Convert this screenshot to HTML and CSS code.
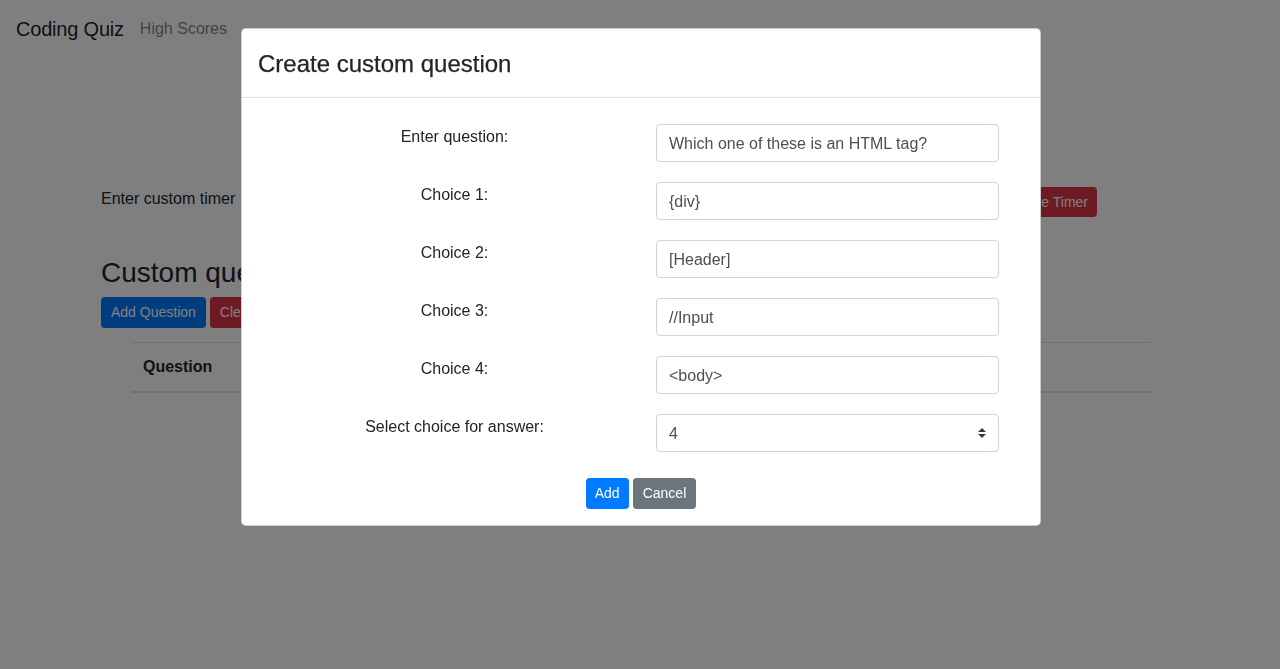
FILE: index.html
```html
<!DOCTYPE html>
<html lang="en">
<head>
<meta charset="utf-8">
<title>Coding Quiz</title>
<link rel="stylesheet" href="styles.css">
</head>
<body>
<nav class="navbar">
  <span class="brand">Coding Quiz</span>
  <span class="nav-link">High Scores</span>
</nav>
<main class="main">
  <div class="timer-row">
    <span class="timer-label">Enter custom timer</span>
    <input class="timer-input" type="text" value="">
    <button class="btn btn-sm btn-danger timer-btn">Update Timer</button>
  </div>
  <h3 class="section-title">Custom questions</h3>
  <div class="btn-row">
    <button class="btn btn-sm btn-primary wide">Add Question</button>
    <button class="btn btn-sm btn-danger wide">Clear Questions</button>
  </div>
  <table class="table">
    <thead>
      <tr><th>Question</th><th>Choices</th><th class="th-answer">Answer</th></tr>
    </thead>
  </table>
</main>

<div class="backdrop"></div>
<div class="modal">
  <div class="modal-dialog">
    <div class="modal-header">
      <h4 class="modal-title">Create custom question</h4>
    </div>
    <div class="modal-body">
      <form class="qform">
        <div class="frow">
          <label class="flabel">Enter question:</label>
          <div class="fcol"><input class="form-control" type="text" value="Which one of these is an HTML tag?"></div>
        </div>
        <div class="frow">
          <label class="flabel">Choice 1:</label>
          <div class="fcol"><input class="form-control" type="text" value="{div}"></div>
        </div>
        <div class="frow">
          <label class="flabel">Choice 2:</label>
          <div class="fcol"><input class="form-control" type="text" value="[Header]"></div>
        </div>
        <div class="frow">
          <label class="flabel">Choice 3:</label>
          <div class="fcol"><input class="form-control" type="text" value="//Input"></div>
        </div>
        <div class="frow">
          <label class="flabel">Choice 4:</label>
          <div class="fcol"><input class="form-control" type="text" value="&lt;body&gt;"></div>
        </div>
        <div class="frow">
          <label class="flabel">Select choice for answer:</label>
          <div class="fcol">
            <div class="select-wrap">
              <select class="form-control custom-select">
                <option>1</option><option>2</option><option>3</option><option selected>4</option>
              </select>
              <svg class="select-arrow" width="8" height="10" viewBox="0 0 4 5"><path d="M2 0L0 2h4zm0 5L0 3h4z" fill="#343a40"/></svg>
            </div>
          </div>
        </div>
        <div class="actions">
          <button type="button" class="btn btn-sm btn-primary">Add</button>
          <button type="button" class="btn btn-sm btn-secondary cancel">Cancel</button>
        </div>
      </form>
    </div>
  </div>
</div>
</body>
</html>
```

FILE: styles.css
```css
* { box-sizing: border-box; }
html, body { margin: 0; height: 100%; }
body {
  font-family: "Liberation Sans", Arial, sans-serif;
  font-size: 16px;
  line-height: 1.5;
  color: #212529;
  background: #fff;
  overflow: hidden;
}

.navbar {
  display: flex;
  align-items: center;
  padding: 8px 16px;
  height: 56px;
}
.brand {
  font-size: 20px;
  line-height: 30px;
  padding: 6px 0 4px;
  margin-right: 16px;
  color: rgba(0,0,0,.9);
  letter-spacing: -0.2px;
}
.nav-link {
  color: rgba(0,0,0,.5);
  padding: 9px 0 7px;
}

.main {
  padding: 131px 0 0 101px;
}
.timer-row {
  display: flex;
  align-items: flex-start;
  width: 996px;
  height: 31px;
}
.timer-label { margin-right: 12px; line-height: 24px; }
.timer-input {
  flex: 1;
  height: 31px;
  border: 1px solid #ced4da;
  border-radius: 4px;
  margin-right: 10px;
}
.btn {
  font-family: inherit;
  border: 1px solid transparent;
  color: #fff;
  cursor: pointer;
}
.btn-sm {
  font-size: 14px;
  line-height: 21px;
  padding: 4px 8px;
  border-radius: 3.2px;
}
.btn-sm.wide { padding: 4px 9px; }
.btn-sm.cancel { padding: 4px 9px; }
.timer-btn { height: 30px; }
.btn-primary { background: #007bff; border-color: #007bff; }
.btn-danger { background: #dc3545; border-color: #dc3545; }
.btn-secondary { background: #6c757d; border-color: #6c757d; }

.section-title {
  font-size: 28px;
  font-weight: 500;
  line-height: 1.2;
  margin: 38px 0 7px;
}
.btn-row {
  display: flex;
  gap: 4px;
}
.table {
  margin: 14px 0 0 30px;
  width: 1020px;
  border-collapse: collapse;
}
.table th {
  text-align: left;
  padding: 12px;
  border-top: 1px solid #dee2e6;
  border-bottom: 2px solid #dee2e6;
  line-height: 24px;
  font-weight: 700;
}
.table .th-answer { width: 200px; }

.backdrop {
  position: fixed;
  inset: 0;
  background: rgba(0,0,0,.5);
}
.modal {
  position: fixed;
  inset: 0;
  display: flex;
  justify-content: center;
  align-items: flex-start;
  padding-top: 28px;
  padding-left: 2px;
}
.modal-dialog {
  width: 800px;
  background: #fff;
  border: 1px solid rgba(0,0,0,.2);
  border-radius: 4.8px;
}
.modal-header {
  padding: 17px 16px 15px;
  border-bottom: 1px solid #dee2e6;
}
.modal-title {
  margin: 0;
  font-size: 24px;
  font-weight: 500;
  line-height: 36px;
  -webkit-text-stroke: 0.25px #212529;
}
.modal-body {
  padding: 26px 16px 16px;
}
.qform {
  margin: 0 10px;
}
.frow {
  display: grid;
  grid-template-columns: 1fr 1fr;
  margin-bottom: 20px;
}
.flabel {
  text-align: center;
  padding: 1px 15px 0;
  line-height: 24px;
}
.fcol { padding: 0 15px; }
.form-control {
  display: block;
  width: 100%;
  height: 38px;
  padding: 7px 12px 5px;
  font-family: inherit;
  font-size: 16px;
  line-height: 24px;
  color: #495057;
  background: #fff;
  border: 1px solid #ced4da;
  border-radius: 4px;
}
.select-wrap { position: relative; }
.custom-select {
  appearance: none;
  -webkit-appearance: none;
  padding-right: 32px;
}
.select-arrow {
  position: absolute;
  right: 13px;
  top: 14px;
  pointer-events: none;
}
.actions {
  display: flex;
  justify-content: center;
  gap: 4px;
  padding-top: 6px;
}
```
